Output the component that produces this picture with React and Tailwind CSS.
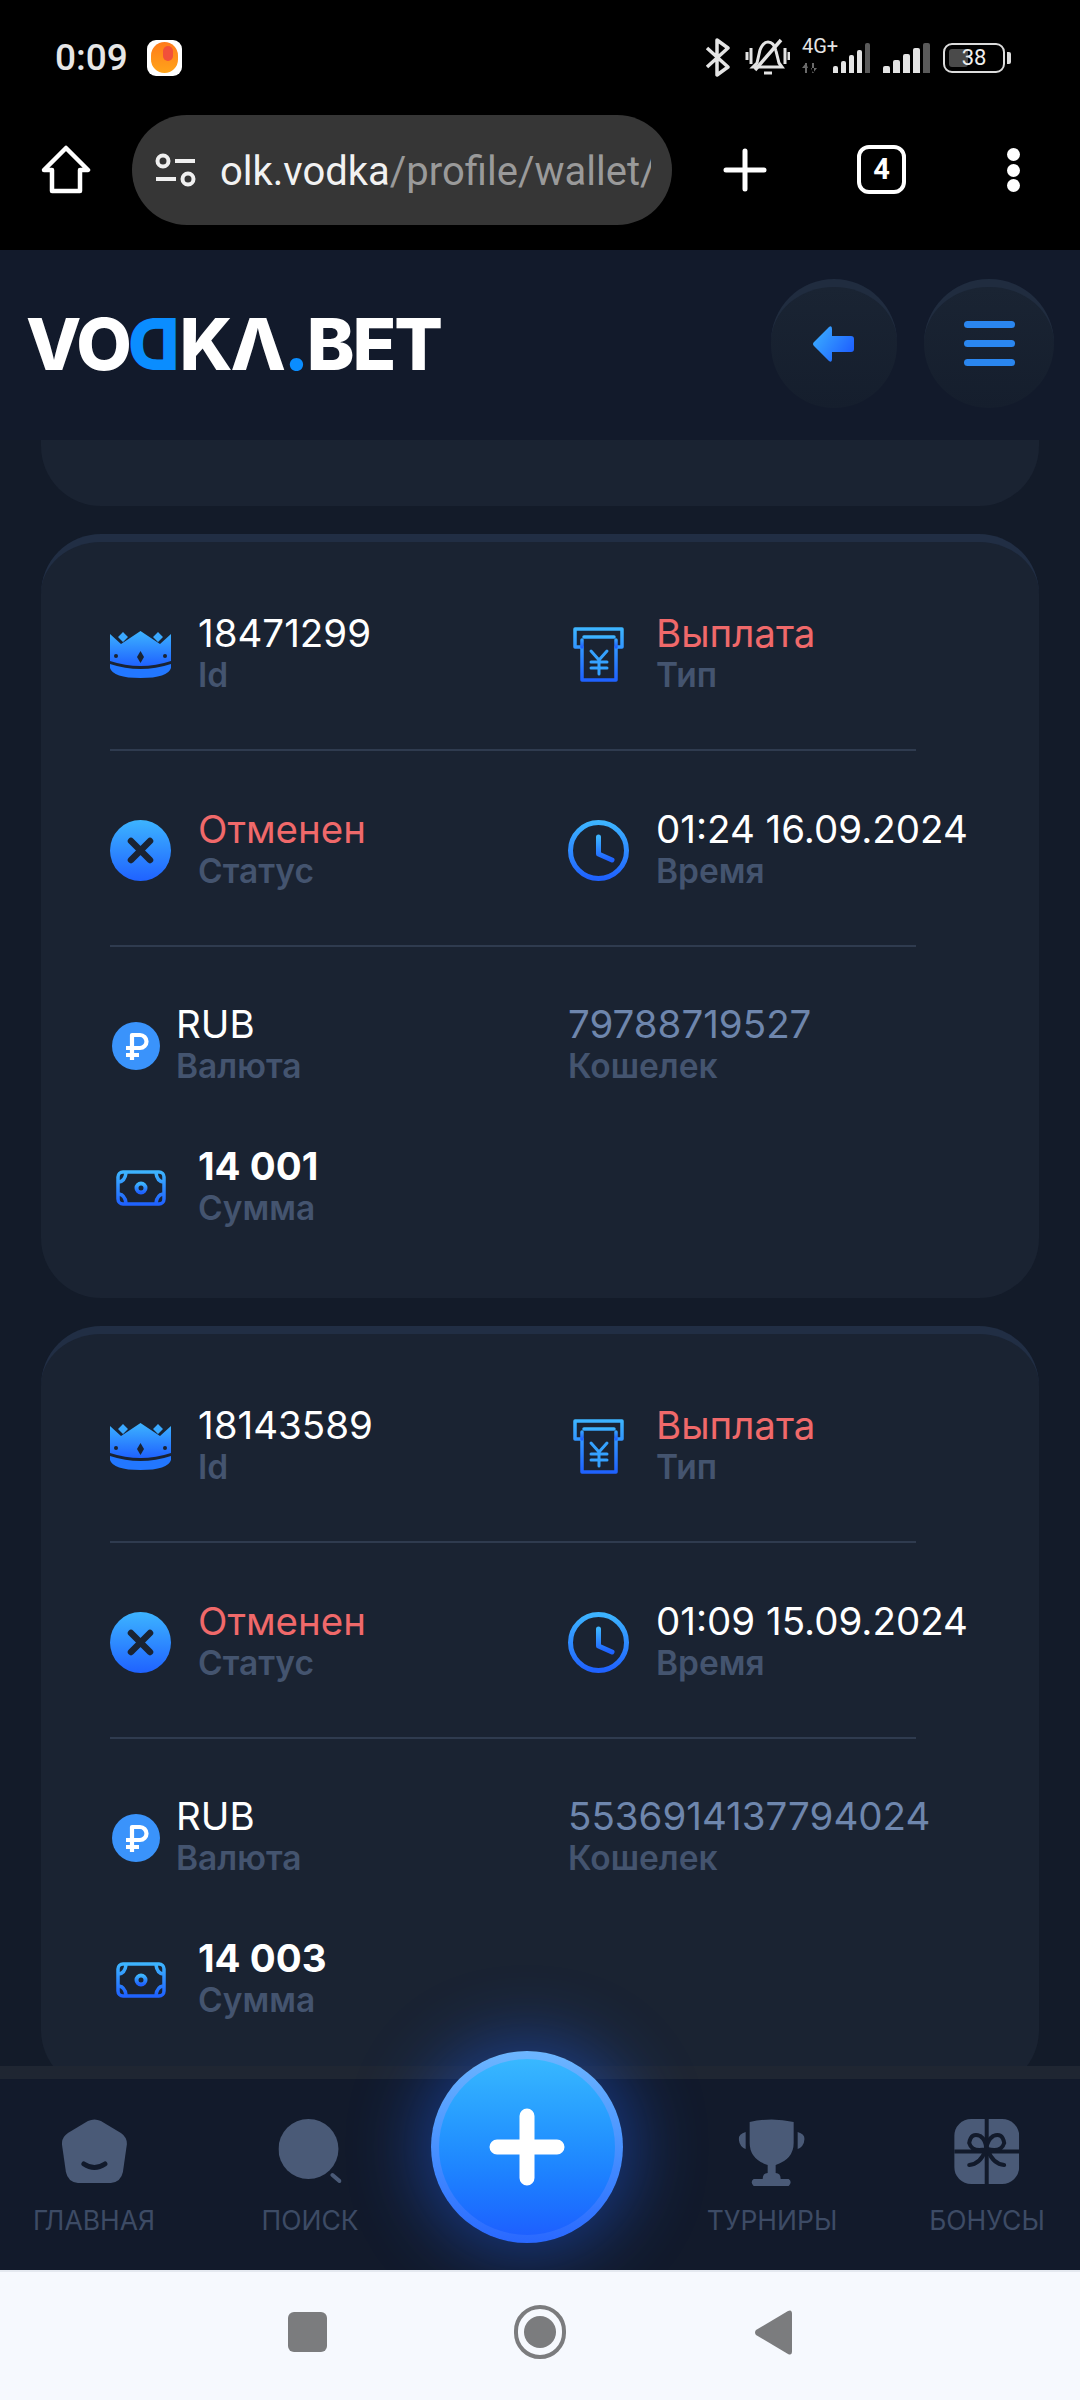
const txs = [
  { id: '18471299', time: '01:24 16.09.2024', wallet: '79788719527', sum: '14 001' },
  { id: '18143589', time: '01:09 15.09.2024', wallet: '5536914137794024', sum: '14 003' },
];

const IconDefs = () => (
  <svg className="absolute w-0 h-0">
    <defs>
      <linearGradient id="blue" x1="0" y1="0" x2="0" y2="1">
        <stop offset="0" stopColor="#3db4ff" />
        <stop offset="1" stopColor="#1f62ff" />
      </linearGradient>
      <linearGradient id="arrow" x1="0" y1="0" x2="1" y2="0.6">
        <stop offset="0" stopColor="#3db4ff" />
        <stop offset="1" stopColor="#1f62ff" />
      </linearGradient>
    </defs>
  </svg>
);

const Crown = () => (
  <svg width="61" height="47" viewBox="0 0 61 47">
    <path d="M0 3 L11 13 L30.5 0 L50 13 L61 3 V30 Q30.5 40 0 30Z" fill="url(#blue)" />
    <path d="M13 1 L18 6 L13 11 L8 6Z M48 1 L53 6 L48 11 L43 6Z" fill="#3aa8ff" />
    <path d="M0 33 Q30.5 43 61 33 V37 Q58 47 30.5 47 Q3 47 0 37Z" fill="#2277ff" />
    <path d="M30.5 20 L34 26 L30.5 32 L27 26Z" fill="#1a2332" />
    <circle cx="6" cy="25" r="2" fill="#1a2332" />
    <circle cx="55" cy="25" r="2" fill="#1a2332" />
  </svg>
);

const Receipt = () => (
  <svg width="51" height="55" viewBox="0 0 51 55" fill="none" stroke="url(#blue)" strokeWidth="3.5" strokeLinecap="round" strokeLinejoin="round">
    <path d="M9 20 H2 V2 H49 V20 H43 V53 H9Z" />
    <path d="M11 10 H41 M9 20 V13 M43 20 V13" />
    <path d="M18 24 L26 33 L34 24 M26 33 V47 M18 35 H34 M18 41 H34" stroke="#35a2ff" strokeWidth="3" />
  </svg>
);

const CancelIcon = () => (
  <svg width="61" height="61" viewBox="0 0 61 61">
    <circle cx="30.5" cy="30.5" r="30.5" fill="url(#blue)" />
    <path d="M21 21 L40 40 M40 21 L21 40" stroke="#1a2332" strokeWidth="6.5" strokeLinecap="round" />
  </svg>
);

const Clock = () => (
  <svg width="61" height="61" viewBox="0 0 61 61" fill="none" stroke="url(#blue)" strokeLinecap="round" strokeLinejoin="round">
    <circle cx="30.5" cy="30.5" r="28" strokeWidth="5" />
    <path d="M30.5 17 V34 L44 40" strokeWidth="5" />
  </svg>
);

const Ruble = () => (
  <svg width="48" height="48" viewBox="0 0 48 48" fill="none">
    <circle cx="24" cy="24" r="24" fill="#3a93fb" />
    <path d="M20 38 V13 H28 A6.500 6.500 0 0 1 28 26 H14 M14 33 H27" stroke="#fff" strokeWidth="4.2" strokeLinejoin="round" />
  </svg>
);

const Money = () => (
  <svg width="50" height="36" viewBox="0 0 50 36" fill="none" stroke="url(#blue)" strokeWidth="3.5">
    <rect x="2" y="2" width="46" height="32" rx="5" />
    <circle cx="25" cy="18" r="4.5" strokeWidth="4" />
    <path d="M3 12 Q9 11 10 3 M47 12 Q41 11 40 3 M3 24 Q9 25 10 33 M47 24 Q41 25 40 33" />
  </svg>
);

const HomeNav = () => (
  <svg width="65" height="64" viewBox="0 0 65 64">
    <path d="M26 2 Q32.5 -1 39 2 L59 14 Q65 18 65 25 L61 53 Q59 63 49 64 H16 Q6 63 4 53 L0 25 Q0 18 6 14Z" fill="#4a5a77" />
    <path d="M22 45 Q32.5 52 43 45" fill="none" stroke="#121a2b" strokeWidth="5" strokeLinecap="round" />
  </svg>
);

const SearchNav = () => (
  <svg width="63" height="64" viewBox="0 0 63 64">
    <circle cx="30" cy="30" r="30" fill="#4a5a77" />
    <path d="M54 56 L61 62" stroke="#4a5a77" strokeWidth="4" strokeLinecap="round" />
  </svg>
);

const TrophyNav = () => (
  <svg width="66" height="67" viewBox="0 0 66 67" fill="#4a5a77">
    <path d="M11 3 Q33 -2 55 3 V24 Q55 40 37 46 V56 H29 V46 Q11 40 11 24Z" />
    <path d="M7 13 V30 Q1 28 0 20 Q0 15 7 13Z M59 13 V30 Q65 28 66 20 Q66 15 59 13Z" />
    <path d="M24 60 Q24 54 29 54 H37 Q42 54 42 60 H50 Q54 63 50 67 H15 Q11 63 15 60Z" />
  </svg>
);

const GiftNav = () => (
  <svg width="65" height="65" viewBox="0 0 65 65">
    <rect width="65" height="65" rx="17" fill="#4a5a77" />
    <path d="M32.5 0 V65 M0 32.5 H65" stroke="#121a2b" strokeWidth="4" />
    <path d="M32 30 Q18 34 15 24 Q17 13 26 17 Q32 21 32 30 Q33 21 39 17 Q48 13 50 24 Q47 34 33 30 M31 32 Q26 45 15 46 M34 32 Q39 45 50 46" fill="none" stroke="#121a2b" strokeWidth="4" strokeLinecap="round" />
  </svg>
);

function Field({ value, label, valueClass = 'text-white' }) {
  return (
    <div className="whitespace-nowrap">
      <div className={`text-[38.5px] leading-[42px] ${valueClass}`}>{value}</div>
      <div className="text-[33.5px] leading-[43px] font-semibold text-[#44546f]">{label}</div>
    </div>
  );
}

function Item({ icon, gap = 'gap-[27px]', slot = 'w-[61px]', children }) {
  return (
    <div className={`flex items-center ${gap}`}>
      <div className={`${slot} flex justify-center shrink-0`}>{icon}</div>
      {children}
    </div>
  );
}

function TxCard({ tx }) {
  return (
    <div className="bg-[#1a2332] border-t-8 border-[#212e44] rounded-[60px] pt-[70px] pb-[68px] pl-[69px] shrink-0">
      <div className="flex">
        <div className="w-[458px]">
          <Item icon={<Crown />}>
            <Field value={tx.id} label="Id" />
          </Item>
        </div>
        <Item icon={<Receipt />}>
          <Field value="Выплата" label="Тип" valueClass="text-[#f0696a]" />
        </Item>
      </div>
      <div className="h-[2px] w-[806px] bg-[#2f3b4f] mt-[52px] mb-[57px]" />
      <div className="flex">
        <div className="w-[458px]">
          <Item icon={<CancelIcon />}>
            <Field value="Отменен" label="Статус" valueClass="text-[#f0696a]" />
          </Item>
        </div>
        <Item icon={<Clock />}>
          <Field value={tx.time} label="Время" />
        </Item>
      </div>
      <div className="h-[2px] w-[806px] bg-[#2f3b4f] mt-[52px] mb-[56px]" />
      <div className="flex">
        <div className="w-[458px] pl-[2px]">
          <Item icon={<Ruble />} slot="w-[48px]" gap="gap-[16px]">
            <Field value="RUB" label="Валюта" />
          </Item>
        </div>
        <Field value={tx.wallet} label="Кошелек" valueClass="text-[#6e86ad]" />
      </div>
      <div className="flex items-center mt-[57px] pl-[6px] gap-[32px]">
        <Money />
        <Field value={<span className="font-bold">{tx.sum}</span>} label="Сумма" />
      </div>
    </div>
  );
}

function NavItem({ icon, label, className }) {
  return (
    <div className={`absolute top-[40px] flex flex-col items-center -translate-x-1/2 ${className}`}>
      <div className="h-[64px]">{icon}</div>
      <span className="mt-[20px] text-[26.5px] leading-[34px] text-[#3d4b65] whitespace-nowrap">{label}</span>
    </div>
  );
}

export default function App() {
  return (
    <div className="w-[1080px] h-[2400px] flex flex-col overflow-hidden bg-black font-['Inter',sans-serif] relative">
      <IconDefs />

      {/* phone status bar */}
      <div className="h-[115px] shrink-0 flex items-center text-[#e8e8e8] font-['Roboto',sans-serif]">
        <span className="ml-[55px] text-[37px] font-medium text-[#e6e6e6]">0:09</span>
        <div className="ml-[19px] w-[35px] h-[36px] bg-white rounded-[9px] flex items-center justify-center relative">
          <div className="w-[27px] h-[31px] rounded-full bg-linear-to-b from-[#ff7a1a] to-[#ffa41a]" />
          <div className="absolute top-[6px] left-[16px] w-[10px] h-[15px] rounded-full bg-[#f2503a]" />
        </div>
        <div className="ml-auto mr-[69px] flex items-center">
          <svg width="25" height="39" viewBox="0 0 25 39" fill="none" stroke="#e4e4e4" strokeWidth="3.5">
            <path d="M2 10 L23 29 L12 37 V2 L23 10 L2 29" strokeLinejoin="round" />
          </svg>
          <svg className="ml-[15px]" width="45" height="39" viewBox="0 0 45 39" fill="none" stroke="#e4e4e4" strokeWidth="3">
            <path d="M12 25 L15 12 Q18 4 23 4 Q29 4 31 13 L34 25 L37 29 H8Z" />
            <path d="M10 32 L36 2" strokeWidth="3.5" />
            <path d="M2 14 V22 M6 10 V26 M40 10 V26 M44 14 V22 M19 35 H27" />
          </svg>
          <div className="ml-[12px] relative w-[68px] h-[30px]">
            <span className="absolute left-0 -top-[7px] text-[20px] leading-[20px] text-[#e4e4e4]">4G+</span>
            <svg className="absolute left-0 bottom-0" width="15" height="10" viewBox="0 0 15 10" fill="#6a6a6a">
              <path d="M3 0 H5 V10 H3 Z M0 5 L4 0 L6 5Z M10 0 H12 V10 H10 Z M9 5 L11 10 L15 5Z" />
            </svg>
            <div className="absolute right-0 bottom-0 flex items-end gap-[3px]">
              <div className="w-[5px] h-[7px] bg-[#e4e4e4] rounded-t-[2px]" />
              <div className="w-[5px] h-[12px] bg-[#e4e4e4] rounded-t-[2px]" />
              <div className="w-[5px] h-[18px] bg-[#e4e4e4] rounded-t-[2px]" />
              <div className="w-[5px] h-[23px] bg-[#e4e4e4] rounded-t-[2px]" />
              <div className="w-[5px] h-[30px] bg-[#5a5a5a] rounded-t-[2px]" />
            </div>
          </div>
          <div className="ml-[13px] flex items-end gap-[3px] h-[30px]">
            <div className="w-[7px] h-[7px] bg-[#e4e4e4] rounded-t-[2px]" />
            <div className="w-[7px] h-[13px] bg-[#e4e4e4] rounded-t-[2px]" />
            <div className="w-[7px] h-[19px] bg-[#e4e4e4] rounded-t-[2px]" />
            <div className="w-[7px] h-[25px] bg-[#e4e4e4] rounded-t-[2px]" />
            <div className="w-[7px] h-[30px] bg-[#5a5a5a] rounded-t-[2px]" />
          </div>
          <div className="ml-[13px] flex items-center">
            <div className="relative w-[62px] h-[30px] border-[2.5px] border-[#dcdcdc] rounded-[9px] flex items-center justify-center">
              <div className="absolute left-[4px] top-[4px] bottom-[4px] w-[19px] bg-[#4a4a4a] rounded-[3px]" />
              <span className="relative text-[22px] leading-none text-[#eeeeee]">38</span>
            </div>
            <div className="ml-[2px] w-[4px] h-[12px] bg-[#dcdcdc] rounded-r-[2px]" />
          </div>
        </div>
      </div>

      {/* browser toolbar */}
      <div className="h-[135px] shrink-0 flex items-start font-['Roboto',sans-serif]">
        <svg className="ml-[41px] mt-[30px]" width="50" height="49" viewBox="0 0 50 49" fill="none" stroke="#fff" strokeWidth="4.5" strokeLinejoin="round">
          <path d="M25 3 L47 25 H39 V46 H11 V25 H3Z" />
        </svg>
        <div className="ml-[41px] w-[540px] h-[110px] rounded-full bg-[#363636] flex items-center pl-[23px]">
          <svg width="41" height="34" viewBox="0 0 41 34" fill="none" stroke="#f0f0f0" strokeWidth="4">
            <circle cx="8" cy="8" r="5.5" />
            <circle cx="33" cy="26" r="5.5" />
            <path d="M20 8 H40 M1 26 H21" />
          </svg>
          <div className="ml-[24px] w-[431px] overflow-hidden whitespace-nowrap text-[40px] leading-[50px] pt-[3px]">
            <span className="text-[#f2f2f2]">olk.vodka</span>
            <span className="text-[#9a9a9a]">/profile/wallet/</span>
          </div>
        </div>
        <svg className="ml-[51px] mt-[33px]" width="44" height="44" viewBox="0 0 44 44" stroke="#fff" strokeWidth="5" strokeLinecap="round">
          <path d="M22 3 V41 M3 22 H41" />
        </svg>
        <div className="ml-[90px] mt-[30px] w-[49px] h-[49px] border-[4.5px] border-white rounded-[12px] flex items-center justify-center text-white text-[29px] font-bold leading-none">4</div>
        <div className="ml-[101px] mt-[33px] w-[13px] h-[44px] flex flex-col justify-between">
          <div className="w-[13px] h-[13px] rounded-full bg-white" />
          <div className="w-[13px] h-[13px] rounded-full bg-white" />
          <div className="w-[13px] h-[13px] rounded-full bg-white" />
        </div>
      </div>

      {/* site header */}
      <div className="h-[190px] shrink-0 bg-[#121a2b] flex items-start">
        <div className="ml-[26px] mt-[55px] flex items-center text-white text-[72px] font-extrabold leading-[78px] tracking-[-2.2px] whitespace-nowrap">
          <span>VO</span>
          <span className="text-[#0a8dff] -scale-x-100 inline-block">D</span>
          <span>KΛ</span>
          <span className="text-[#0a8dff]">.</span>
          <span>BET</span>
        </div>
        <div className="ml-auto mr-[26px] mt-[29px] flex gap-[27px]">
          <div className="w-[126px] h-[129px] rounded-full bg-linear-to-b from-[#1a2433] to-[#151e2d] border-t-8 border-[#202c3f] flex items-center justify-center pr-[2px] pb-[8px]">
            <svg width="41" height="36" viewBox="0 0 41 36" fill="url(#arrow)">
              <path d="M1 16 L16 1 Q19 -1 19 3 V10 H38 Q41 10 41 13 V23 Q41 26 38 26 H19 V33 Q19 37 16 35 L1 20 Q-1 18 1 16Z" />
            </svg>
          </div>
          <div className="w-[130px] h-[129px] rounded-full bg-linear-to-b from-[#1a2433] to-[#151e2d] border-t-8 border-[#202c3f] flex flex-col items-center justify-center gap-[12px] pb-[8px]">
            <div className="w-[51px] h-[7px] rounded-full bg-[#2a86ef]" />
            <div className="w-[51px] h-[7px] rounded-full bg-[#2a86ef]" />
            <div className="w-[51px] h-[7px] rounded-full bg-[#2a86ef]" />
          </div>
        </div>
      </div>

      {/* wallet list */}
      <div className="h-[1639px] shrink-0 overflow-hidden bg-[#131b29] px-[41px] flex flex-col gap-[28px]">
        <div className="h-[66px] shrink-0 bg-[#1a2332] rounded-b-[60px]" />
        {txs.map((tx) => (
          <TxCard key={tx.id} tx={tx} />
        ))}
      </div>

      {/* bottom nav */}
      <div className="relative h-[204px] -mt-[13px] shrink-0 bg-[#121a2b] border-t-[13px] border-[#1f2632]">
        <NavItem icon={<HomeNav />} label="ГЛАВНАЯ" className="left-[94px]" />
        <NavItem icon={<SearchNav />} label="ПОИСК" className="left-[310px]" />
        <NavItem icon={<TrophyNav />} label="ТУРНИРЫ" className="left-[772px]" />
        <NavItem icon={<GiftNav />} label="БОНУСЫ" className="left-[987px]" />
        <div className="absolute left-[431px] -top-[28px] w-[192px] h-[192px] rounded-full p-[8px] bg-linear-to-b from-[#6db6ff] to-[#2a68ff] shadow-[0_0_70px_12px_rgba(30,100,255,0.42)] flex">
          <div className="flex-1 rounded-full bg-linear-to-b from-[#38b8ff] to-[#1e60ff] flex items-center justify-center">
            <svg width="76" height="78" viewBox="0 0 76 78" stroke="#fff" strokeWidth="15" strokeLinecap="round">
              <path d="M38 8 V70 M8 39 H68" />
            </svg>
          </div>
        </div>
      </div>

      {/* android nav */}
      <div className="flex-1 bg-[#f6f9fe] border-t-2 border-[#e4e9f0] relative z-10 flex items-center justify-center pb-[8px]">
        <div className="w-[39px] h-[40px] bg-[#7b7c7e] rounded-[6px]" />
        <div className="ml-[187px] w-[52px] h-[54px] rounded-full border-[4px] border-[#7b7c7e] flex items-center justify-center">
          <div className="w-[32px] h-[32px] rounded-full bg-[#7b7c7e]" />
        </div>
        <svg className="ml-[189px]" width="37" height="45" viewBox="0 0 37 45" fill="#7b7c7e">
          <path d="M1 20 L33 1 Q37 -1 37 4 V41 Q37 46 33 44 L1 25 Q-1 22.500 1 20Z" />
        </svg>
      </div>
    </div>
  );
}
